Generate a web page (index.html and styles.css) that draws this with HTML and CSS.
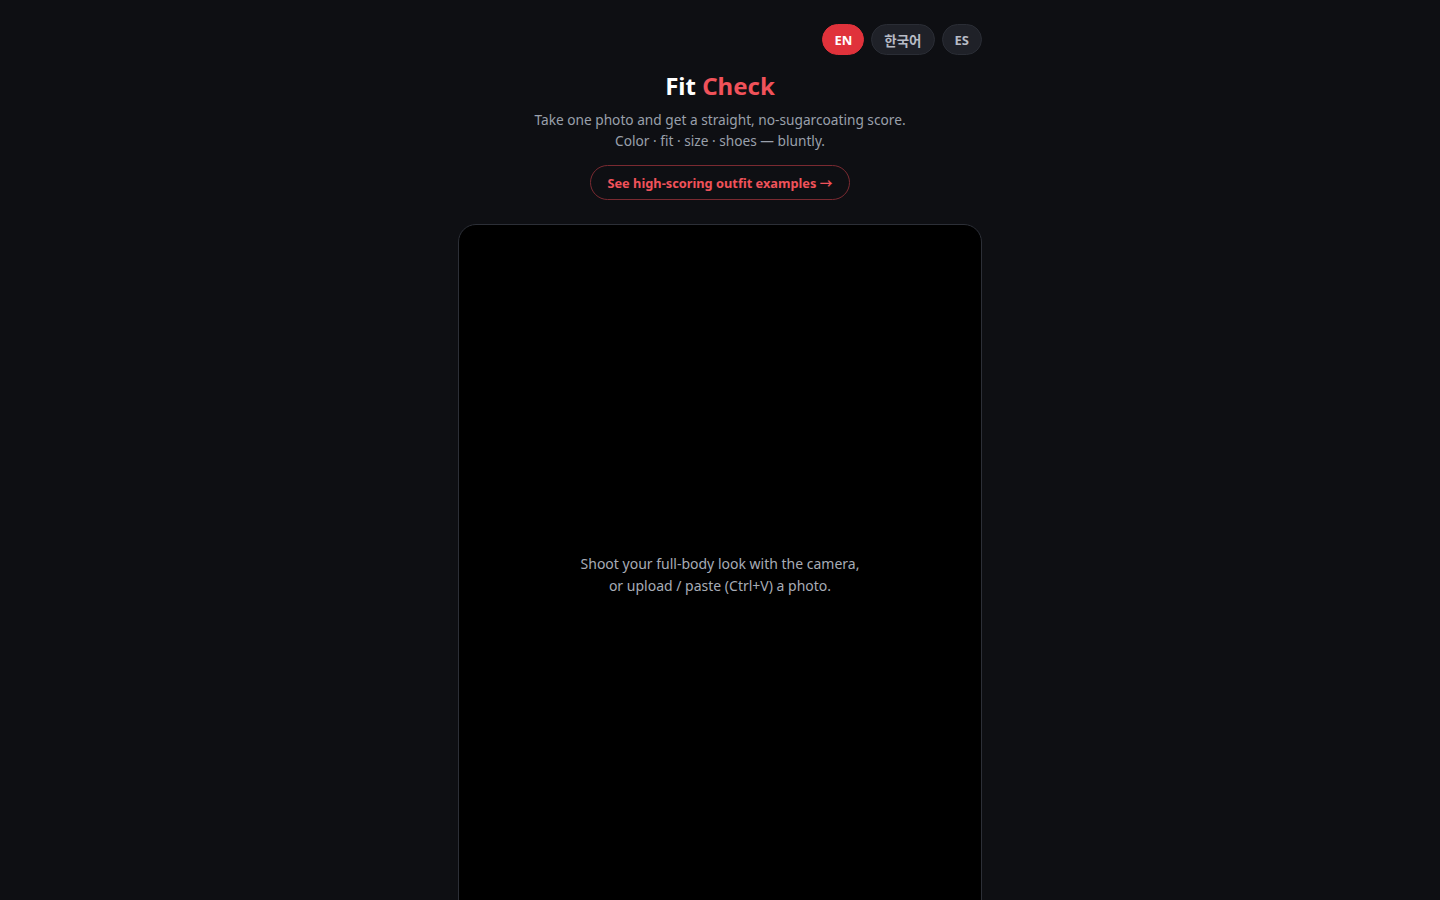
FILE: index.html
```html
<!DOCTYPE html>
<html lang="en">
<head>
<meta charset="utf-8">
<title>Fit Check</title>
<link rel="stylesheet" href="styles.css">
</head>
<body>
<main class="wrap">
  <nav class="langs">
    <button class="lang active">EN</button>
    <button class="lang ko">한국어</button>
    <button class="lang es">ES</button>
  </nav>
  <header class="hero">
    <h1 class="title">Fit <span class="accent">Check</span></h1>
    <p class="sub">Take one photo and get a straight, no-sugarcoating score.<br>Color · fit · size · shoes — bluntly.</p>
    <a class="examples" href="#">See high-scoring outfit examples →</a>
  </header>
  <section class="stage">
    <p class="hint">Shoot your full-body look with the camera,<br>or upload / paste (Ctrl+V) a photo.</p>
  </section>
</main>
</body>
</html>
```
FILE: styles.css
```css
* { box-sizing: border-box; }
html, body { margin: 0; padding: 0; }
body {
  background: #0e0f13;
  color: #e8e9ec;
  font-family: "Noto Sans", "Noto Sans CJK KR", sans-serif;
}
.wrap {
  width: 524px;
  margin: 0 auto;
  padding-top: 24px;
  display: flex;
  flex-direction: column;
  align-items: center;
}
.langs {
  align-self: flex-end;
  display: flex;
  gap: 7px;
}
.lang {
  height: 31px;
  padding: 0 11px;
  border-radius: 16px;
  border: 1px solid #2a2d35;
  background: #1f2128;
  color: #b7bbc5;
  font-family: "Noto Sans", "Noto Sans CJK KR", sans-serif;
  font-size: 13px;
  font-weight: 700;
  cursor: pointer;
}
.lang.ko { padding: 0 12px; font-size: 13.5px; }
.lang.es { padding: 0 12px; }
.lang.active {
  background: #e0323b;
  border-color: #e0323b;
  color: #ffffff;
}
.hero {
  display: flex;
  flex-direction: column;
  align-items: center;
  text-align: center;
}
.title {
  margin: 14px 0 0;
  font-size: 24px;
  line-height: 34px;
  font-weight: 700;
  color: #ffffff;
}
.accent { color: #f0525a; }
.sub {
  margin: 6px 0 0;
  font-size: 13.7px;
  line-height: 21px;
  color: #9aa0ab;
}
.examples {
  margin-top: 14px;
  height: 35px;
  padding: 0 16px;
  display: inline-flex;
  align-items: center;
  border: 1px solid #7a2a31;
  border-radius: 18px;
  color: #f0525a;
  font-size: 12.8px;
  font-weight: 700;
  text-decoration: none;
}
.stage {
  margin-top: 24px;
  width: 524px;
  aspect-ratio: 3 / 4;
  padding-top: 4px;
  background: #000000;
  border: 1px solid #2c2f37;
  border-radius: 18px;
  display: flex;
  align-items: center;
  justify-content: center;
}
.hint {
  margin: 0;
  text-align: center;
  font-size: 14px;
  line-height: 22px;
  color: #a7acb6;
}
```
